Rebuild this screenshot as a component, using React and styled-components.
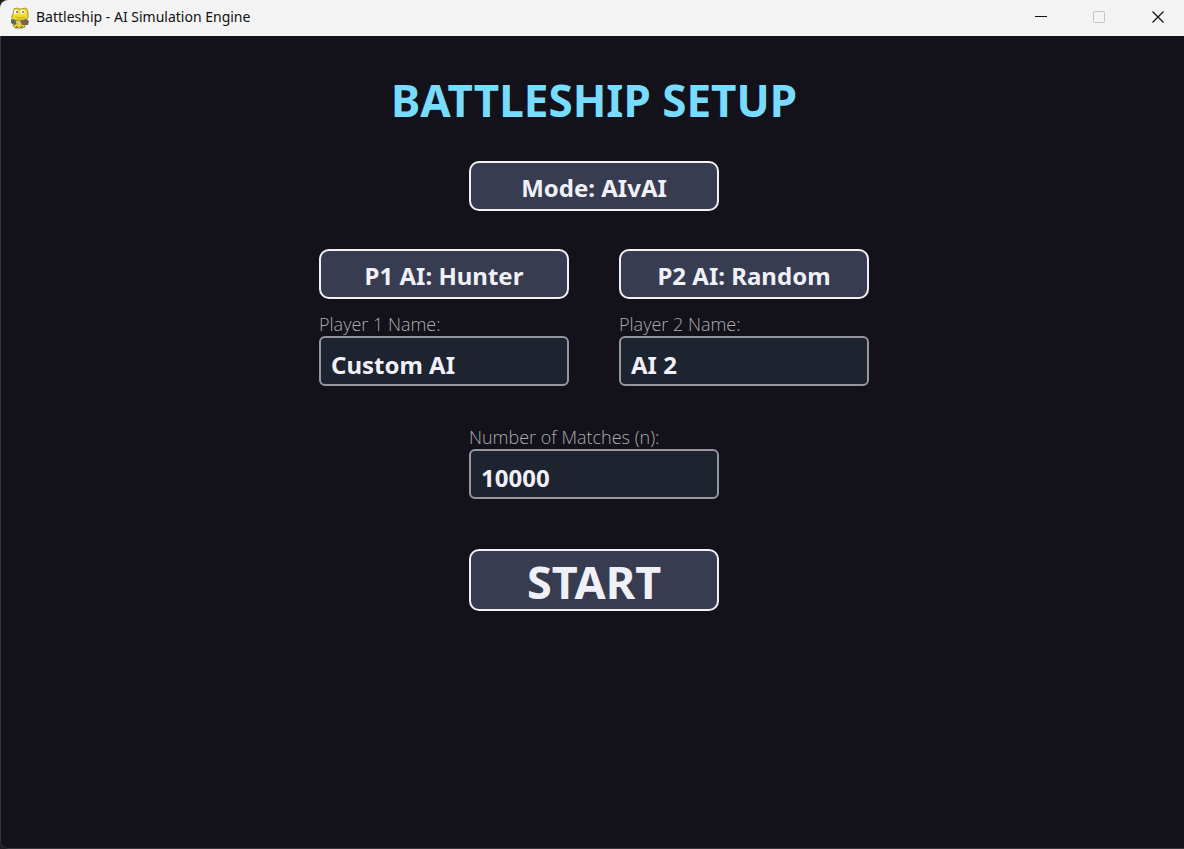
import { useState } from 'react'
import styled, { createGlobalStyle, ThemeProvider } from 'styled-components'

const theme = {
  colors: {
    background: '#13121a',
    titleBar: '#f3f3f3',
    accent: '#78dcff',
    button: '#373c50',
    buttonHover: '#464c64',
    field: '#1e2330',
    border: '#f0f0f5',
    fieldBorder: '#96969f',
    text: '#f0f0f8',
    label: '#acacb0',
  },
  fonts: {
    ui: '"Noto Sans", "Open Sans", sans-serif',
    label: '"Open Sans", "Noto Sans", sans-serif',
  },
}

const GlobalStyle = createGlobalStyle`
  *, *::before, *::after {
    box-sizing: border-box;
  }

  body {
    margin: 0;
    background: #202024;
    font-family: ${({ theme }) => theme.fonts.ui};
  }
`

const Window = styled.div`
  display: flex;
  flex-direction: column;
  min-height: 100vh;
  border-radius: 8px 0 0 8px;
  overflow: hidden;
  background: ${({ theme }) => theme.colors.background};
`

const TitleBar = styled.header`
  display: flex;
  align-items: center;
  height: 36px;
  padding-left: 10px;
  background: ${({ theme }) => theme.colors.titleBar};
  color: #111;
`

const AppName = styled.span`
  flex: 1;
  margin-left: 6px;
  padding-bottom: 2px;
  font-size: 14px;
  line-height: 20px;
`

const WindowButton = styled.button`
  display: flex;
  align-items: center;
  justify-content: center;
  width: ${({ $last }) => ($last ? '56px' : '58px')};
  height: 36px;
  padding: ${({ $last }) => ($last ? '0 0 2px 4px' : '0 0 2px')};
  border: none;
  background: none;
  color: #111;

  &:disabled {
    color: #c4c4c4;
  }
`

const Screen = styled.main`
  flex: 1;
  display: flex;
  flex-direction: column;
  align-items: center;
  padding: 32px 0 32px 3px;
  border: 1px solid #38383c;
  border-top: none;
  border-right: none;
  border-radius: 0 0 0 8px;
`

const Title = styled.h1`
  margin: 0 0 29px;
  font-size: 44px;
  line-height: 64px;
  font-weight: 700;
  color: ${({ theme }) => theme.colors.accent};
`

const SetupForm = styled.form`
  display: flex;
  flex-direction: column;
  align-items: center;
`

const Players = styled.div`
  display: flex;
  flex-wrap: wrap;
  justify-content: center;
  gap: 50px;
  margin: 38px 0 40px;
`

const Player = styled.div`
  display: flex;
  flex-direction: column;
  gap: 14px;
`

const SetupButton = styled.button`
  width: 250px;
  height: ${({ $large }) => ($large ? '62px' : '50px')};
  padding: ${({ $large }) => ($large ? '4px 0 0' : '3px 0 0')};
  border: 2px solid ${({ theme }) => theme.colors.border};
  border-radius: 10px;
  background: ${({ theme }) => theme.colors.button};
  color: ${({ theme }) => theme.colors.text};
  font-family: inherit;
  font-size: ${({ $large }) => ($large ? '45px' : '24px')};
  line-height: ${({ $large }) => ($large ? '54px' : '40px')};
  font-weight: 700;
  cursor: pointer;

  &:hover {
    background: ${({ theme }) => theme.colors.buttonHover};
  }
`

const Field = styled.div`
  display: flex;
  flex-direction: column;
  margin-bottom: ${({ $spaced }) => ($spaced ? '50px' : '0')};
`

const Label = styled.label`
  font-family: ${({ theme }) => theme.fonts.label};
  font-size: 18px;
  line-height: 23px;
  font-weight: 300;
  color: ${({ theme }) => theme.colors.label};
`

const Input = styled.input`
  width: 250px;
  height: 50px;
  padding: 6px 10px 0;
  border: 2px solid ${({ theme }) => theme.colors.fieldBorder};
  border-radius: 6px;
  background: ${({ theme }) => theme.colors.field};
  color: ${({ theme }) => theme.colors.text};
  font-family: inherit;
  font-size: 24px;
  font-weight: 700;
  outline: none;

  &:focus {
    border-color: ${({ theme }) => theme.colors.accent};
  }
`

const SnakeIcon = () => (
  <svg width="20" height="22" viewBox="0 0 20 22" aria-hidden="true">
    <path d="M7 12 H14 L15 20 L12 21 H5 L3 18 Z" fill="#e3cf26" stroke="#77702a" strokeWidth="0.8" />
    <path d="M4 2 Q6 0 9 2 L12 2 Q15 0 17 2 L18 6 L18 9 Q19 12 14 13 H6 Q1 13 2 9 L3 7 Z" fill="#f1df2c" stroke="#8a7f22" strokeWidth="0.8" />
    <path d="M1 12 L5 13 L7 16 L5 18 L1 16 Z" fill="#5d6558" />
    <path d="M10 14 L16 12 L19 14 L18 18 L12 18 Z" fill="#6b665c" />
    <circle cx="14" cy="16" r="1.5" fill="#b04c3c" />
    <path d="M6 15 L9 17 L11 16" fill="none" stroke="#c9c9b8" strokeWidth="1.4" />
    <circle cx="6" cy="5" r="2.2" fill="#fffef0" />
    <circle cx="12.5" cy="5" r="2.2" fill="#fffef0" />
    <circle cx="7" cy="5" r="0.9" fill="#555" />
    <circle cx="13" cy="5" r="0.9" fill="#555" />
    <path d="M5 10 Q10 12 15 10" fill="none" stroke="#a89920" strokeWidth="0.8" />
    <path d="M6 19 L8 21 M12 19 L11 21" stroke="#5d5a20" strokeWidth="1" />
  </svg>
)

const MODES = ['AIvAI', 'PvAI', 'PvP']
const AI_TYPES = ['Hunter', 'Random']

const next = (list, value) => list[(list.indexOf(value) + 1) % list.length]

const App = () => {
  const [mode, setMode] = useState('AIvAI')
  const [matches, setMatches] = useState('10000')
  const [players, setPlayers] = useState([
    { ai: 'Hunter', name: 'Custom AI' },
    { ai: 'Random', name: 'AI 2' },
  ])

  const updatePlayer = (index, changes) => {
    setPlayers(players.map((p, i) => (i === index ? { ...p, ...changes } : p)))
  }

  return (
    <ThemeProvider theme={theme}>
      <GlobalStyle />
      <Window>
        <TitleBar>
          <SnakeIcon />
          <AppName>Battleship - AI Simulation Engine</AppName>
          <WindowButton type="button" aria-label="Minimize">
            <svg width="12" height="12" viewBox="0 0 12 12">
              <path d="M0 5.5 H12" stroke="currentColor" />
            </svg>
          </WindowButton>
          <WindowButton type="button" aria-label="Maximize" disabled>
            <svg width="12" height="12" viewBox="0 0 12 12">
              <rect x="0.5" y="0.5" width="11" height="11" rx="1" fill="none" stroke="currentColor" />
            </svg>
          </WindowButton>
          <WindowButton type="button" aria-label="Close" $last>
            <svg width="12" height="12" viewBox="0 0 12 12">
              <path d="M0.5 0.5 L11.5 11.5 M11.5 0.5 L0.5 11.5" stroke="currentColor" strokeWidth="1.2" />
            </svg>
          </WindowButton>
        </TitleBar>

        <Screen>
          <Title>BATTLESHIP SETUP</Title>
          <SetupForm onSubmit={(e) => e.preventDefault()}>
            <SetupButton type="button" onClick={() => setMode(next(MODES, mode))}>
              Mode: {mode}
            </SetupButton>

            <Players>
              {players.map((player, i) => (
                <Player key={i}>
                  <SetupButton
                    type="button"
                    onClick={() => updatePlayer(i, { ai: next(AI_TYPES, player.ai) })}
                  >
                    P{i + 1} AI: {player.ai}
                  </SetupButton>
                  <Field>
                    <Label htmlFor={`player-${i}`}>Player {i + 1} Name:</Label>
                    <Input
                      id={`player-${i}`}
                      value={player.name}
                      onChange={(e) => updatePlayer(i, { name: e.target.value })}
                    />
                  </Field>
                </Player>
              ))}
            </Players>

            <Field $spaced>
              <Label htmlFor="matches">Number of Matches (n):</Label>
              <Input
                id="matches"
                inputMode="numeric"
                value={matches}
                onChange={(e) => setMatches(e.target.value)}
              />
            </Field>

            <SetupButton type="submit" $large>START</SetupButton>
          </SetupForm>
        </Screen>
      </Window>
    </ThemeProvider>
  )
}

export default App
